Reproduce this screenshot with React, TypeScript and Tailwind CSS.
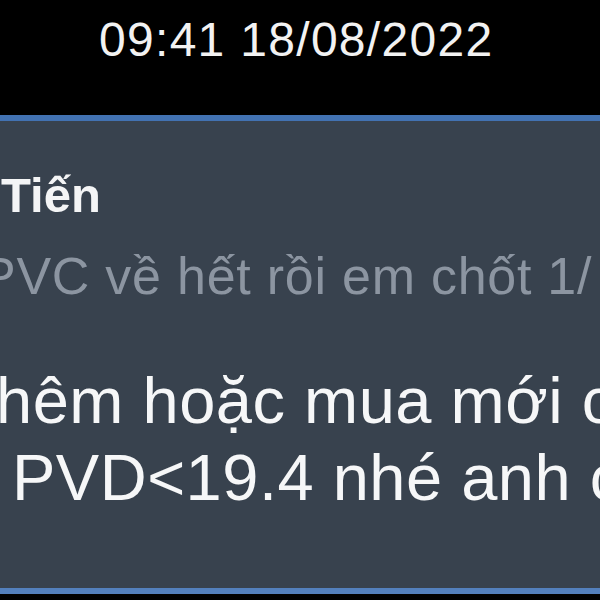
import React from "react";

export default function App() {
  const font = { fontFamily: '"Liberation Sans", Arial, sans-serif' };
  return (
    <div className="w-[600px] h-[600px] overflow-hidden bg-black flex flex-col" style={font}>
      <div className="h-[115px] shrink-0 pt-[16px] pl-[99px]">
        <div className="text-[48px] leading-[48px] tracking-[1.3px] text-[#f2f2f2] whitespace-nowrap">
          09:41 18/08/2022
        </div>
      </div>
      <div className="h-[6px] shrink-0 bg-[#4272b2]" />
      <div className="h-[467px] shrink-0 bg-[#38424e] overflow-hidden flex flex-col pt-[50px]">
        <div className="pl-[1px] text-[49px] leading-[49px] font-bold text-[#f4f5f6] whitespace-nowrap">
          Tiến
        </div>
        <div className="mt-[30px] ml-[-19px] text-[52px] leading-[52px] tracking-[0.75px] text-[#8c95a1] whitespace-nowrap">
          PVC về hết rồi em chốt 1/
        </div>
        <div className="mt-[60px] text-[65px] leading-[77px] tracking-[0.5px] text-[#f6f7f8] whitespace-nowrap">
          <div className="ml-[-4px]">hêm hoặc mua mới c</div>
          <div className="ml-[12px]">PVD&lt;19.4 nhé anh c</div>
        </div>
      </div>
      <div className="h-[6px] shrink-0 bg-[#5380bd]" />
      <div className="flex-1 bg-black" />
    </div>
  );
}
